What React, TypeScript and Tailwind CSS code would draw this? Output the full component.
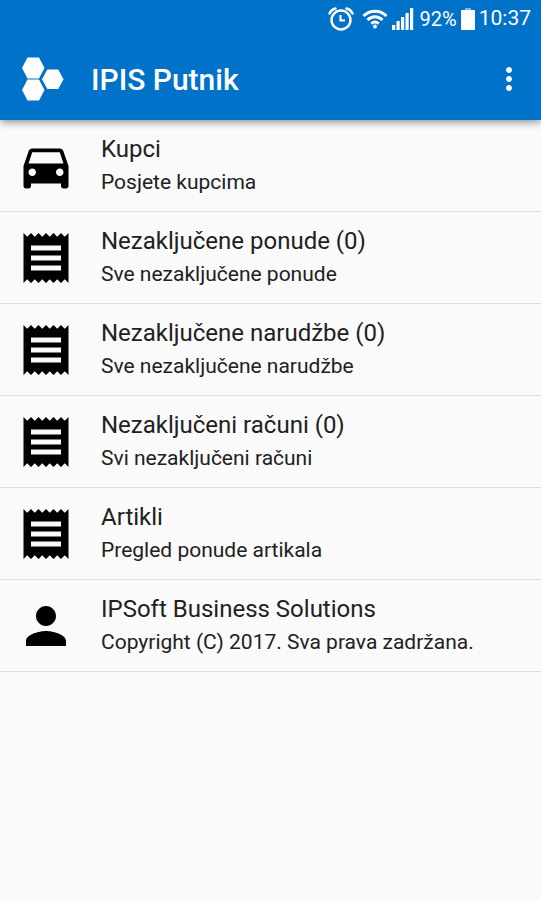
import React from "react";
import {
  MdDirectionsCar,
  MdMoreVert,
  MdPerson,
  MdReceipt,
} from "react-icons/md";

const MENU = [
  {
    id: "kupci",
    title: "Kupci",
    description: "Posjete kupcima",
    icon: MdDirectionsCar,
  },
  {
    id: "ponude",
    title: "Nezaključene ponude (0)",
    description: "Sve nezaključene ponude",
    icon: MdReceipt,
  },
  {
    id: "narudzbe",
    title: "Nezaključene narudžbe (0)",
    description: "Sve nezaključene narudžbe",
    icon: MdReceipt,
  },
  {
    id: "racuni",
    title: "Nezaključeni računi (0)",
    description: "Svi nezaključeni računi",
    icon: MdReceipt,
  },
  {
    id: "artikli",
    title: "Artikli",
    description: "Pregled ponude artikala",
    icon: MdReceipt,
  },
  {
    id: "about",
    title: "IPSoft Business Solutions",
    description: "Copyright (C) 2017. Sva prava zadržana.",
    icon: MdPerson,
  },
];

function AlarmIcon() {
  return (
    <svg viewBox="0 0 26 24" fill="none" stroke="currentColor" className="w-[26px] h-6">
      <circle cx="13" cy="13" r="9.5" strokeWidth="2.4" />
      <path d="M12.5 8v5.5H17" strokeWidth="2.2" />
      <path
        d="M1.5 6.5C2.5 4 4.5 2.3 7.5 1.5M24.5 6.5C23.5 4 21.5 2.3 18.5 1.5"
        strokeWidth="2.4"
        strokeLinecap="round"
      />
    </svg>
  );
}

function WifiIcon() {
  return (
    <svg viewBox="0 0 26 20" fill="none" stroke="currentColor" className="w-[26px] h-5">
      <path d="M1.5 7C8 .5 18 .5 24.5 7" strokeWidth="3" />
      <path d="M5.5 11C10 6.7 16 6.7 20.5 11" strokeWidth="3" />
      <path d="M9.3 14.6C11.5 12.6 14.5 12.6 16.7 14.6" strokeWidth="2.8" />
      <circle cx="13" cy="17.5" r="1.9" fill="currentColor" stroke="none" />
    </svg>
  );
}

function SignalIcon() {
  return (
    <svg viewBox="0 0 22 22" fill="currentColor" className="w-[22px] h-[22px]">
      <rect x="0" y="17" width="3.2" height="5" />
      <rect x="4.5" y="13" width="3.2" height="9" />
      <rect x="9" y="9" width="3.2" height="13" />
      <rect x="13.5" y="5" width="3.2" height="17" />
      <rect x="18" y="0" width="3.2" height="22" />
    </svg>
  );
}

function BatteryIcon() {
  return (
    <svg viewBox="0 0 14 22" fill="currentColor" className="w-[14px] h-[22px]">
      <rect x="4" y="0" width="6" height="2" opacity="0.5" />
      <rect x="0" y="2" width="14" height="20" />
    </svg>
  );
}

function Logo() {
  return (
    <svg viewBox="0 0 42 44" fill="currentColor" className="w-[42px] h-11">
      <path d="M5.5.5H17L22.5 11 17 21.5H5.5L0 11z" />
      <path d="M5.5 22.5H17L22.5 33 17 43.5H5.5L0 33z" />
      <path d="M25 12h11.500L42 22.300 36.500 32.500H25L19.500 22.300z" stroke="#0072c9" />
    </svg>
  );
}

export default function App() {
  return (
    <main className="min-h-screen bg-[#fafafa] font-[Roboto,sans-serif]">
      <header className="relative bg-[#0072c9] text-white shadow-[0_2px_8px_rgba(0,0,0,0.45)]">
        <div className="h-[38px] pr-[10px] flex items-center justify-end text-xl">
          <AlarmIcon />
          <span className="ml-2 flex">
            <WifiIcon />
          </span>
          <span className="ml-1 flex">
            <SignalIcon />
          </span>
          <span className="ml-1.5">92%</span>
          <span className="ml-1 flex">
            <BatteryIcon />
          </span>
          <span className="ml-1 text-[21px]">10:37</span>
        </div>

        <div className="h-[82px] pl-[22px] pr-[14px] flex items-center gap-[27px]">
          <Logo />
          <h1 className="flex-1 text-[30px] font-medium">IPIS Putnik</h1>
          <button type="button" aria-label="Menu">
            <MdMoreVert className="w-9 h-9" />
          </button>
        </div>
      </header>

      <ul>
        {MENU.map(({ id, title, description, icon: Icon }) => (
          <li key={id} className="border-b border-[#dcdcdc]">
            <button
              type="button"
              className="w-full h-[91px] pl-4 flex items-center gap-[25px] text-left"
            >
              <Icon className="w-[60px] h-[60px] shrink-0 text-black" />
              <span className="min-w-0 pb-1">
                <span className="block text-2xl leading-9 text-[#212121]">{title}</span>
                <span className="block text-[21px] leading-[30px] text-[#212121]">
                  {description}
                </span>
              </span>
            </button>
          </li>
        ))}
      </ul>
    </main>
  );
}
